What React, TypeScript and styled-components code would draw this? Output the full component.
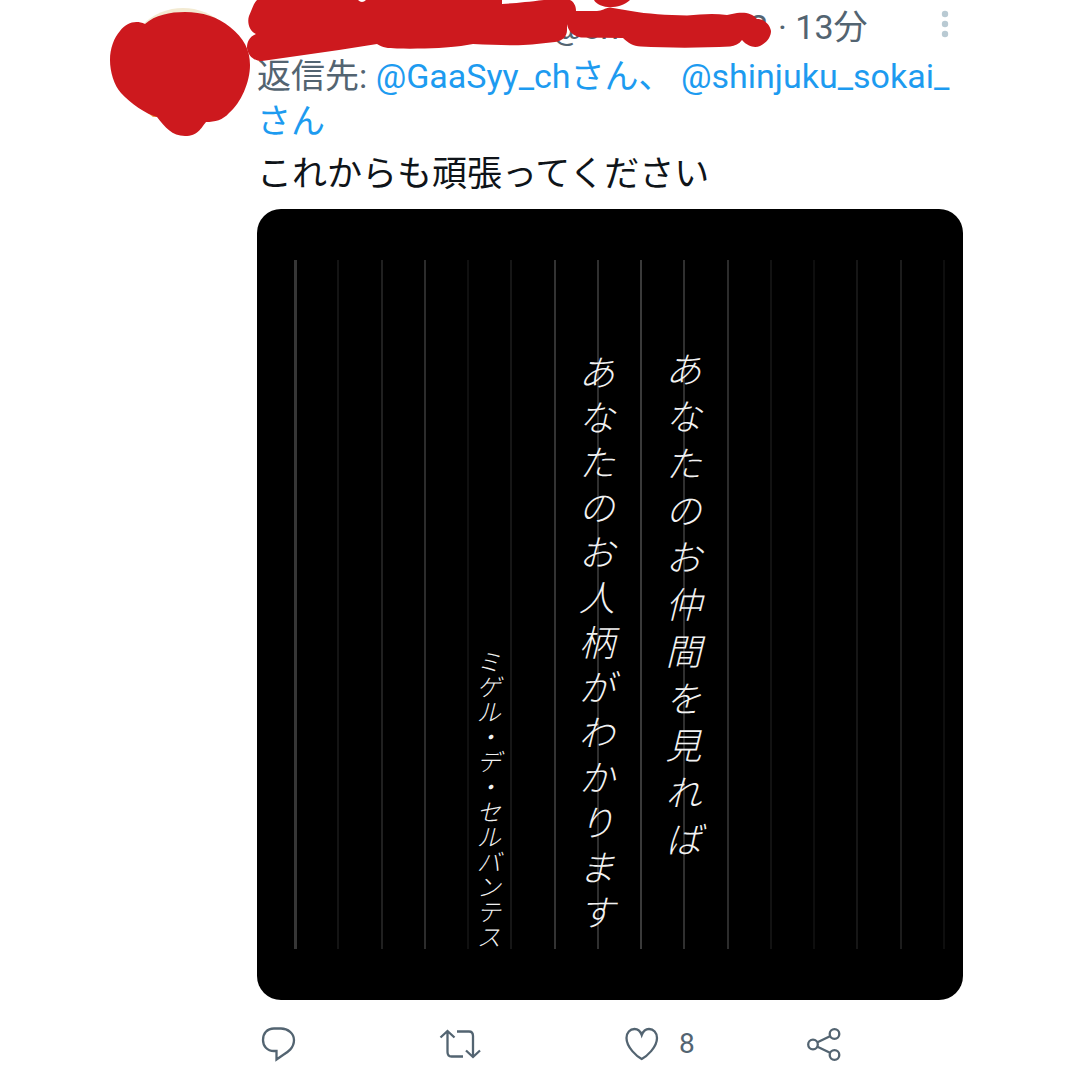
import React from "react";
import styled, { createGlobalStyle } from "styled-components";

const Global = createGlobalStyle`
  *, *::before, *::after { box-sizing: border-box; }
  body {
    margin: 0;
    background: #fff;
    font-family: Roboto, "Noto Sans CJK JP", sans-serif;
    color: #0f1419;
  }
`;

const Tweet = styled.article`
  display: flex;
  align-items: flex-start;
  gap: 7px;
  padding: 0 117px 12px 110px;
`;

const Avatar = styled.svg`
  flex: none;
  width: 140px;
  height: 140px;
`;

const Content = styled.div`
  flex: 1;
  min-width: 0;
`;

const Header = styled.header`
  position: relative;
  display: flex;
  align-items: center;
  height: 54px;
  font-size: 34px;
  line-height: 45px;
  color: #536471;
`;

const Handle = styled.span`
  display: flex;
  justify-content: space-between;
  width: 216px;
  margin-left: 295px;
`;

const Time = styled.time`
  margin-left: 10px;
`;

const Scribble = styled.svg`
  position: absolute;
  top: 0;
  left: -10px;
  width: 530px;
  height: 64px;
  pointer-events: none;
`;

const MenuButton = styled.button`
  display: flex;
  margin-left: auto;
  padding: 0 14px 6px;
  border: 0;
  background: none;
  color: #b9cad3;
`;

const ReplyTo = styled.p`
  margin: 0;
  font-size: 34px;
  line-height: 45px;
  color: #536471;
`;

const Mention = styled.a`
  color: #1d9bf0;
  text-decoration: none;
`;

const Body = styled.p`
  margin: 8px 0 12px;
  font-size: 35px;
  line-height: 45px;
`;

const Paper = styled.figure`
  display: grid;
  grid-template-columns: repeat(15, 1fr) 2px;
  grid-template-rows: 689px;
  margin: 0;
  padding: 51px 18px 51px 37px;
  border-radius: 24px;
  background: #000;
`;

const Rule = styled.span<{ $at: number; $tone: string; $wide?: boolean }>`
  grid-row: 1;
  grid-column: ${(p) => p.$at};
  width: ${(p) => (p.$wide ? 3 : 2)}px;
  background: ${(p) => p.$tone};
`;

const Verse = styled.p<{ $from: number; $to: number; $top: number; $pitch: number; $size: number }>`
  grid-row: 1;
  grid-column: ${(p) => p.$from} / ${(p) => p.$to};
  justify-self: center;
  width: ${(p) => p.$size}px;
  margin: ${(p) => p.$top}px 0 0;
  font-family: "Noto Sans CJK JP", sans-serif;
  font-size: ${(p) => p.$size}px;
  font-style: italic;
  font-weight: 300;
  line-height: ${(p) => p.$pitch}px;
  line-break: anywhere;
  color: #f2f2f2;
`;

const Actions = styled.footer`
  display: grid;
  grid-template-columns: 178px 186px 182px 1fr;
  padding: 26px 0 0 4px;
`;

const Action = styled.button`
  display: flex;
  align-items: center;
  justify-self: start;
  gap: 20px;
  height: 36px;
  padding: 0;
  border: 0;
  background: none;
  font-family: inherit;
  font-size: 28px;
  line-height: 36px;
  color: #536471;
`;

const Icon = styled.svg`
  flex: none;
  height: 36px;
  fill: none;
  stroke: currentColor;
  stroke-width: 2.3;
`;

const tones = [
  "#363636", "#141414", "#202020", "#2c2c2c", "#101010", "#161616", "#333333", "#303030",
  "#3a3a3a", "#303030", "#2c2c2c", "#121212", "#0e0e0e", "#161616", "#1c1c1c", "#0e0e0e",
];

export default function App() {
  return (
    <>
      <Global />
      <Tweet>
        <Avatar viewBox="0 0 140 140" role="img" aria-label="avatar">
          <circle cx="73" cy="65" r="57" fill="#f3ead2" />
          <path d="M31 108l12 9 8 0z" fill="#efa04a" />
          <path
            fill="#cd191e"
            d="M0 60C0 48 4 38 10 31C17 22 26 20 35 24C45 15 60 12 75 12C92 12 108 17 120 27C134 38 140 50 140 65C140 82 131 103 119 113C113 120 105 122 96 122C91 128 88 136 75 136C62 136 55 127 47 117C36 114 20 103 11 93C4 85 0 72 0 60Z"
          />
        </Avatar>
        <Content>
          <Header>
            <Handle>
              <span>@cm</span>
              <span>2</span>
            </Handle>
            <Time>· 13分</Time>
            <MenuButton aria-label="menu">
              <svg width="8" height="28" viewBox="0 0 8 28" fill="currentColor">
                <circle cx="4" cy="4" r="3.2" />
                <circle cx="4" cy="14" r="3.2" />
                <circle cx="4" cy="24" r="3.2" />
              </svg>
            </MenuButton>
            <Scribble viewBox="0 0 530 64" aria-hidden="true">
              <path
                fill="#cd191e"
                d="M10 0C6 4 5 10 2 16C0 22 2 31 9 34C2 37 0 42 0 48C1 56 7 61 15 61L92 50L130 44C136 48 140 48 150 48.500C175 49 200 48 214 46L226 44C250 45 270 46 285 44.500L308 42C316 41 320 36 320 30V24C321 30 325 36 334 37.500L376 38C381 43 386 46 394 46.500C420 48 455 48 483 46.500C488 46 492 44 495 40C501 47 508 48 513 46C521 42 524 36 524 31C523 24 517 19 510 19C505 13 498 12 490 13L480 15C467 13 455 14 440 15.500C420 15 400 14 384 11L363 7.500C358 8 355 11 350 11H329C329 6 327 2 323 0L297 0C280 2 270 3 255 4V0H119Q115 4 111 0Z"
              />
              <path fill="#cd191e" d="M347 0C352 9 372 10 383 0Z" />
            </Scribble>
          </Header>
          <ReplyTo>
            返信先: <Mention href="#gaasyy">@GaaSyy_chさん、</Mention>{" "}
            <Mention href="#shinjuku">
              <span>@shinjuku_sokai_</span>
              <span>さん</span>
            </Mention>
          </ReplyTo>
          <Body>これからも頑張ってください</Body>
          <Paper>
            {tones.map((tone, i) => (
              <Rule key={i} $at={i + 1} $tone={tone} $wide={i === 0} />
            ))}
            <Verse $from={9} $to={11} $top={84} $pitch={47} $size={36}>
              あなたのお仲間を見れば
            </Verse>
            <Verse $from={7} $to={9} $top={88} $pitch={45} $size={36}>
              あなたのお人柄がわかります
            </Verse>
            <Verse $from={5} $to={6} $top={388} $pitch={25} $size={24}>
              ミゲル・デ・セルバンテス
            </Verse>
          </Paper>
          <Actions>
            <Action aria-label="reply">
              <Icon width="36" viewBox="0 0 36 36">
                <path d="M13 2.500H20C27 2.500 33 7.500 33 14C33 22 27 26 22 29L15.500 33.500V25H13C6 25 2 20 2 14C2 7.500 6 2.500 13 2.500Z" />
              </Icon>
            </Action>
            <Action aria-label="retweet">
              <Icon width="42" viewBox="0 0 42 36">
                <path d="M1.500 11.500L8.500 5L15.500 11.500M8.500 5V26Q8.500 30.500 12.500 30.500H24M18 5.500H30Q34 5.500 34 10V31M27 24.500L34 31L41 24.500" />
              </Icon>
            </Action>
            <Action aria-label="like">
              <Icon width="34" viewBox="0 0 34 36">
                <path d="M16.700 33C12 30.500 1.500 21.500 1.500 12C1.500 6.500 5 3 9.500 3C13 3 15.500 5.500 16.700 9C18 5.500 20.500 3 24 3C28.500 3 32 6.500 32 12C32 21.500 21.500 30.500 16.700 33Z" />
              </Icon>
              <span>8</span>
            </Action>
            <Action aria-label="share">
              <Icon width="36" viewBox="0 0 36 36">
                <circle cx="6" cy="18.500" r="4.800" />
                <circle cx="27.500" cy="8" r="4.800" />
                <circle cx="27.500" cy="29" r="4.800" />
                <path d="M10.500 16.300L23 10.200M10.500 20.700L23 26.800" />
              </Icon>
            </Action>
          </Actions>
        </Content>
      </Tweet>
    </>
  );
}
